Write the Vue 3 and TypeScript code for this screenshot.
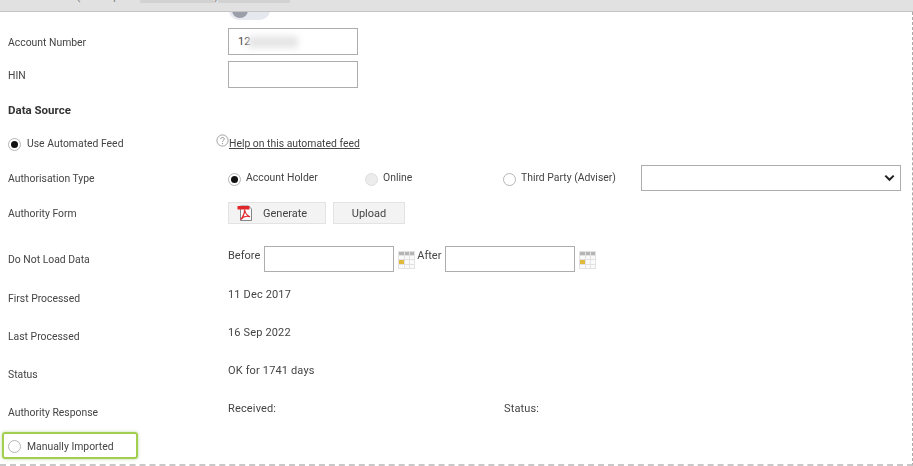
<script setup lang="ts">
const calendarCells = [0, 1, 2, 3, 4, 5, 6, 7, 8, 9, 10, 11]
</script>

<template>
  <div class="page">
    <header class="topbar">
      <span class="top-left">Bank Account (BT Wrap No. <span class="masked"></span>)<span class="masked tail"></span></span>
      <span class="top-right">Status: Active</span>
    </header>
    <main class="panel">
      <div class="toggle-row"><div class="toggle"><span class="knob"></span></div></div>

      <div class="row account"><label>Account Number</label>
        <div class="input wide"><span class="acc">12</span><span class="smudge"></span></div>
      </div>
      <div class="row hin"><label>HIN</label><div class="input wide"></div></div>
      <div class="row source"><h3>Data Source</h3></div>

      <div class="row feed">
        <div class="lab-radio"><span class="radio on"></span><span>Use Automated Feed</span></div>
        <div class="help">
          <svg class="q" width="13" height="13" viewBox="0 0 13 13">
            <circle cx="6.5" cy="6.5" r="5.6" fill="none" stroke="#999" stroke-width=".9" />
            <path d="M4.8 5.1c0-2.2 3.5-2.2 3.5-.1 0 1.3-1.8 1.3-1.8 2.8" fill="none" stroke="#888" stroke-width=".9" />
            <circle cx="6.5" cy="9.6" r=".6" fill="#888" />
          </svg>
          <a>Help on this automated feed</a>
        </div>
      </div>

      <div class="row auth"><label>Authorisation Type</label>
        <div class="auth-opts">
          <span class="opt o1"><span class="radio on"></span><span class="t">Account Holder</span></span>
          <span class="opt o2"><span class="radio off"></span><span class="t">Online</span></span>
          <span class="opt o3"><span class="radio"></span><span class="t">Third Party (Adviser)</span></span>
          <div class="select">
            <svg width="11" height="8" viewBox="0 0 11 8"><path d="M1.3 1.6 5.5 5.8 9.7 1.6" fill="none" stroke="#222" stroke-width="2" /></svg>
          </div>
        </div>
      </div>

      <div class="row form"><label>Authority Form</label>
        <div class="btns">
          <button class="btn gen">
            <svg width="16" height="16" viewBox="0 0 16 16">
              <path d="M3.500 1h8l3 3v11.500h-11z" fill="#fff" stroke="#777" stroke-width=".9" />
              <rect x="0.500" y="1" width="12" height="3.500" fill="#e0262b" />
              <path d="M7.500 4.500c.4 4-1.800 7.500-3.800 10 2.200-2.600 6-3.800 9.300-2.800-2.800-1.200-4.900-3.600-5.500-7.200z" fill="none" stroke="#e0262b" stroke-width="1.200" />
            </svg>
            <span>Generate</span>
          </button>
          <button class="btn up">Upload</button>
        </div>
      </div>

      <div class="row noload"><label>Do Not Load Data</label>
        <div class="dates">
          <span class="dl before">Before</span><div class="input date"></div>
          <span class="cal"><i v-for="c in calendarCells" :key="c" :class="{ y: c === 6 }"></i></span>
          <span class="dl after">After</span><div class="input date"></div>
          <span class="cal"><i v-for="c in calendarCells" :key="c" :class="{ y: c === 6 }"></i></span>
        </div>
      </div>

      <div class="row info"><label>First Processed</label><span class="val">11 Dec 2017</span></div>
      <div class="row info"><label>Last Processed</label><span class="val">16 Sep 2022</span></div>
      <div class="row info"><label>Status</label><span class="val">OK for 1741 days</span></div>
      <div class="row info"><label>Authority Response</label>
        <span class="val recv">Received:</span><span class="val">Status:</span>
      </div>

      <div class="manual"><span class="radio"></span><span class="mt">Manually Imported</span></div>
    </main>
  </div>
</template>

<style>
html, body { margin: 0; background: #fff; overflow: hidden; }
</style>

<style scoped>
.page {
  width: 913px; height: 466px; overflow: hidden; box-sizing: border-box;
  font-family: Roboto, "Liberation Sans", sans-serif; font-size: 10.4px; color: #444;
  filter: blur(.4px);
}
.topbar {
  height: 12px; box-sizing: border-box; background: #e1e1e1; border-bottom: 1px solid #c4c4c4;
  display: flex; justify-content: space-between; align-items: flex-start;
  overflow: hidden; padding: 0 8px 0 10px; line-height: 12px; color: #777;
}
.topbar span { flex: none; margin-top: -9px; }
.top-right { color: #aaa; }
.topbar .masked { display: inline-block; width: 74px; height: 12px; margin-top: 0; background: #d2d2d2; vertical-align: top; }
.topbar .tail { width: 72px; }
.panel {
  width: 913px; height: 454px; box-sizing: border-box; position: relative;
  border-right: 1px dashed #aaa; border-bottom: 2px dashed #c8c8c8; padding-left: 8px;
}
.toggle-row { height: 8px; padding-left: 221px; overflow: hidden; }
.toggle { width: 41px; height: 20px; margin-top: -12px; background: #e6e8ef; border-radius: 10px; position: relative; }
.knob { position: absolute; left: 3px; top: 2px; width: 16px; height: 16px; border-radius: 50%; background: #9a9ea8; }
.row { display: flex; align-items: center; }
label { width: 220px; flex: none; }
.account { margin-top: 8px; height: 27px; }
.hin { margin-top: 6px; height: 27px; }
.source { margin-top: 12px; height: 20px; }
h3 { margin: 0; font-size: 11.5px; font-weight: 700; color: #333; }
.input { box-sizing: border-box; border: 1px solid #adadad; background: #fff; }
.wide { width: 130px; height: 27px; display: flex; align-items: center; padding-left: 9px; position: relative; }
.account label, .hin label { position: relative; top: 1px; }
.acc { color: #444; font-size: 11px; }
.smudge { width: 50px; height: 12px; background: #e6e6e6; filter: blur(3px); margin-left: -2px; }
.feed { margin-top: 13px; height: 20px; }
.lab-radio { width: 208px; display: flex; align-items: center; gap: 6px; flex: none; }
.help { display: flex; align-items: flex-start; }
.q { margin-top: -3px; }
.help a { text-decoration: underline; color: #444; }
.radio {
  width: 11px; height: 11px; border-radius: 50%; border: 1px solid #b5b5b5; background: #fff;
  display: inline-block; flex: none; position: relative; top: 1px;
}
.radio.on::after {
  content: ""; position: absolute; left: 2px; top: 2px; width: 7px; height: 7px; border-radius: 50%; background: #111;
}
.radio.off { background: #ececec; border-color: #ddd; }
.auth { margin-top: 12px; height: 26px; }
.auth-opts { display: flex; align-items: center; }
.opt { display: flex; align-items: center; gap: 5px; flex: none; }
.opt .t { position: relative; top: -1px; }
.o1 { width: 137px; }
.o2 { width: 138px; }
.o3 { width: 138px; }
.select {
  width: 260px; height: 26px; box-sizing: border-box; border: 1px solid #adadad; display: flex;
  align-items: center; justify-content: flex-end; padding-right: 5px;
}
.form { margin-top: 11px; height: 22px; }
.btns { display: flex; gap: 7px; }
.btn {
  height: 22px; box-sizing: border-box; background: #f3f3f3; border: 1px solid #e3e3e3; color: #444;
  font: inherit; font-size: 11px; padding: 0; display: flex; align-items: center; justify-content: center;
}
.gen { width: 98px; gap: 10px; padding-left: 8px; justify-content: flex-start; }
.up { width: 72px; }
.noload { margin-top: 22px; height: 26px; }
.dates { display: flex; align-items: center; font-size: 11px; }
.dl { position: relative; top: -4px; }
.before { margin-right: 4px; }
.after { margin-right: 4px; }
.date { width: 130px; height: 26px; }
.cal {
  width: 17px; height: 18px; margin: 0 2px 0 4px; display: grid; grid-template-columns: repeat(3, 1fr);
  grid-template-rows: 3px repeat(3, 1fr); gap: 1px; background: #e2e2e2; padding: 1px; box-sizing: border-box;
  position: relative; top: 1px;
}
.cal i { background: #fafafa; }
.cal i:nth-child(-n+3) { background: #b5b5b5; }
.cal i.y { background: #e0b93c; }
.info { height: 38px; }
.noload + .info { margin-top: 7px; }
.val { position: relative; top: -4px; font-size: 11px; letter-spacing: .15px; }
.recv { width: 276px; }
.manual {
  position: absolute; left: 2px; top: 420px; width: 136px; height: 27px; box-sizing: border-box;
  border: 2px solid #a2cf50; border-radius: 3px; box-shadow: 0 0 3px rgba(120,170,60,.5);
  display: flex; align-items: center; gap: 6px; padding-left: 4px;
}
.mt { position: relative; top: 1px; }
</style>
